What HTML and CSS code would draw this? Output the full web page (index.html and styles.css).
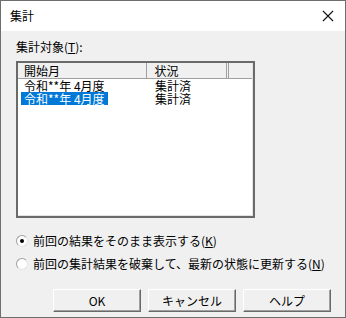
FILE: index.html
```html
<html>
<head>
<link rel="stylesheet" href="styles.css">
</head>
<body>
<div class="window">
  <div class="titlebar">
    <span class="title">集計</span>
    <svg class="close" width="12" height="12" viewBox="0 0 12 12">
      <path d="M1 1 L11 11 M11 1 L1 11" stroke="#111" stroke-width="1.1" fill="none"/>
    </svg>
  </div>
  <div class="content">
    <div class="label">集計対象(<u>T</u>):</div>
    <div class="list">
      <div class="list-inner">
        <div class="list-head">
          <div class="col col-month">開始月</div>
          <div class="col col-state">状況</div>
          <div class="col col-rest"></div>
        </div>
        <div class="list-row">
          <div class="cell cell-month"><span class="item">令和**年 4月度</span></div>
          <div class="cell cell-state">集計済</div>
        </div>
        <div class="list-row">
          <div class="cell cell-month"><span class="item selected">令和**年 4月度</span></div>
          <div class="cell cell-state">集計済</div>
        </div>
      </div>
    </div>
    <div class="options">
      <div class="option">
        <span class="radio checked"></span>
        <span>前回の結果をそのまま表示する(<u>K</u>)</span>
      </div>
      <div class="option">
        <span class="radio"></span>
        <span>前回の集計結果を破棄して、最新の状態に更新する(<u>N</u>)</span>
      </div>
    </div>
    <div class="buttons">
      <button class="btn">OK</button>
      <button class="btn">キャンセル</button>
      <button class="btn">ヘルプ</button>
    </div>
  </div>
</div>
</body>
</html>
```

FILE: styles.css
```css
body {
  margin: 0;
  font-family: "Noto Sans CJK JP", "Liberation Sans", sans-serif;
  font-size: 12px;
  color: #000;
}

.window {
  width: 346px;
  height: 318px;
  box-sizing: border-box;
  border: 1px solid #6e6e6e;
  background-color: #f0f0f0;
}

.titlebar {
  height: 30px;
  background-color: #fff;
  display: flex;
  align-items: center;
  justify-content: space-between;
  padding: 0 11px 0 9px;
}

.title {
  line-height: 14px;
}

.content {
  padding: 9px 0 0 15px;
}

.label {
  line-height: 14px;
  margin-bottom: 7px;
}

.list {
  width: 239px;
  height: 157px;
  box-sizing: border-box;
  border: 2px solid #6a6a6a;
  background-color: #fff;
}

.list-inner {
  height: 100%;
  border-right: 1px solid #e3e3e3;
  border-bottom: 1px solid #e3e3e3;
  box-sizing: border-box;
}

.list-head {
  display: flex;
  height: 16px;
  background-color: #f0f0f0;
  border-bottom: 1px solid #a0a0a0;
  box-sizing: border-box;
}

.col {
  line-height: 15px;
  box-sizing: border-box;
  border-right: 1px solid #a0a0a0;
}

.col-month {
  width: 130px;
  padding-left: 6px;
}

.col-state {
  width: 80px;
  padding-left: 7px;
}

.col-rest {
  width: 24px;
  margin-left: 1px;
  border-left: 1px solid #a0a0a0;
  border-right: none;
}

.list-row {
  display: flex;
  height: 13px;
  line-height: 13px;
}

.cell-month {
  width: 130px;
  padding-left: 3px;
  box-sizing: border-box;
}

.cell-state {
  padding-left: 7px;
}

.item {
  display: inline-block;
  padding: 0 3px;
}

.selected {
  background-color: #0078d7;
  color: #fff;
}

.options {
  margin-top: 16px;
}

.option {
  display: flex;
  align-items: center;
  height: 14px;
  line-height: 14px;
  margin-bottom: 9px;
}

.radio {
  width: 12px;
  height: 12px;
  box-sizing: border-box;
  border: 1px solid #a0a0a0;
  border-right-color: #e3e3e3;
  border-bottom-color: #e3e3e3;
  border-radius: 50%;
  background-color: #fff;
  margin-right: 5px;
  display: flex;
  align-items: center;
  justify-content: center;
}

.radio.checked::after {
  content: "";
  width: 4px;
  height: 4px;
  border-radius: 50%;
  background-color: #000;
}

.buttons {
  display: flex;
  gap: 7px;
  margin-top: 18px;
  margin-left: 37px;
}

.btn {
  width: 88px;
  height: 23px;
  box-sizing: border-box;
  font-family: inherit;
  font-size: 12px;
  padding: 0;
  background-color: #f0f0f0;
  border: 1px solid;
  border-color: #fff #696969 #696969 #fff;
  box-shadow: inset -1px -1px #a0a0a0;
  color: #000;
}
```
